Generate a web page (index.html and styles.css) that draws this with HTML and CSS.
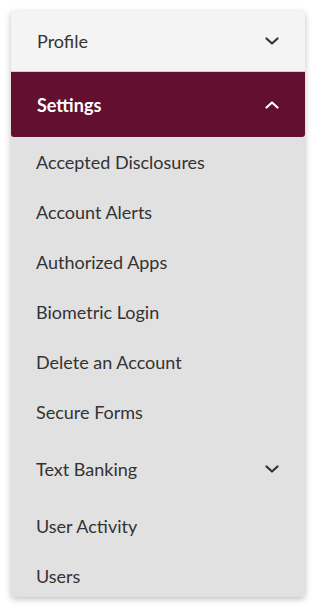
FILE: index.html
```html
<!DOCTYPE html>
<html lang="en">
<head>
    <meta charset="UTF-8">
    <meta name="viewport" content="width=device-width, initial-scale=1.0">
    <title>Settings Menu</title>
    <link rel="stylesheet" href="styles.css">
</head>
<body>

    <nav class="menu">
        <div class="menu-header">
            <span>Profile</span>
            <svg class="chevron" viewBox="0 0 14 8"><path d="M1.5 1.5 L7 6.5 L12.5 1.5"/></svg>
        </div>

        <div class="menu-header active">
            <span>Settings</span>
            <svg class="chevron" viewBox="0 0 14 8"><path d="M1.5 6.5 L7 1.5 L12.5 6.5"/></svg>
        </div>

        <ul class="submenu">
            <li>Accepted Disclosures</li>
            <li>Account Alerts</li>
            <li>Authorized Apps</li>
            <li>Biometric Login</li>
            <li>Delete an Account</li>
            <li>Secure Forms</li>
            <li class="has-children">
                <span>Text Banking</span>
                <svg class="chevron" viewBox="0 0 14 8"><path d="M1.5 1.5 L7 6.5 L12.5 1.5"/></svg>
            </li>
            <li>User Activity</li>
            <li>Users</li>
        </ul>
    </nav>

</body>
</html>
```

FILE: styles.css
```css
body {
    margin: 0;
    padding: 11px;
    background-color: #ffffff;
    font-family: 'Lato', sans-serif;
    color: #333;
}

.menu {
    width: 294px;
    height: 586px;
    background-color: #e1e1e1;
    border-radius: 3px;
    box-shadow: 0 2px 6px rgba(0, 0, 0, 0.25);
    overflow: hidden;
}

.menu-header {
    display: flex;
    justify-content: space-between;
    align-items: center;
    height: 60px;
    padding: 0 26px 0 26px;
    background-color: #f4f4f4;
    border-bottom: 1px solid #cfcfcf;
    font-size: 18px;
}

.menu-header.active {
    height: 65px;
    background-color: #630f30;
    color: #ffffff;
    font-weight: bold;
    border-bottom: none;
    border-radius: 0 0 3px 3px;
}

.chevron {
    width: 14px;
    height: 8px;
    fill: none;
    stroke: #333;
    stroke-width: 2.2;
    stroke-linecap: round;
    stroke-linejoin: round;
}

.active .chevron {
    stroke: #ffffff;
}

.submenu {
    list-style: none;
    margin: 0;
    padding: 0;
}

.submenu li {
    display: flex;
    justify-content: space-between;
    align-items: center;
    height: 50px;
    padding: 0 26px 0 25px;
    font-size: 18px;
}

.submenu li.has-children {
    height: 64px;
}
```
